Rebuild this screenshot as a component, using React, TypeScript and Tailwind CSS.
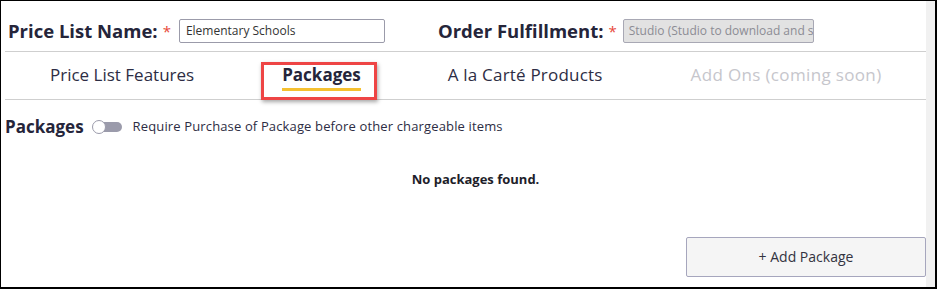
import React from "react";

export default function App() {
  const font = { fontFamily: "'Open Sans', Lato, sans-serif" };
  return (
    <div
      className="w-[937px] h-[289px] bg-white border-black border-t border-l border-r-2 border-b-2 flex overflow-hidden"
      style={font}
    >
      <div className="flex-1 flex flex-col pl-[4px] relative min-w-0">
        {/* Header row */}
        <div className="h-[51px] flex items-center border-b border-[#cfcfcf] pt-[10px] whitespace-nowrap">
          <div className="flex items-center pl-[3px]">
            <span className="text-[18.5px] font-bold text-[#25253a] leading-none">Price List Name:</span>
            <span className="text-[#e8473a] text-[15px] ml-[5px] mr-[8px] leading-none">*</span>
            <div className="w-[206px] h-[24px] border border-[#9b9baa] rounded-[2px] flex items-center pl-[6px] text-[12px] text-[#333]">
              Elementary Schools
            </div>
          </div>
          <div className="flex items-center ml-[53px]">
            <span className="text-[18.5px] font-bold text-[#25253a] leading-none">Order Fulfillment:</span>
            <span className="text-[#e8473a] text-[15px] ml-[5px] mr-[6px] leading-none">*</span>
            <div className="w-[191px] h-[24px] border border-[#a8a8b4] rounded-[2px] bg-[#e2e2e2] flex items-center pl-[5px] text-[12px] text-[#8c8c94] overflow-hidden whitespace-nowrap">
              Studio (Studio to download and s
            </div>
          </div>
        </div>

        {/* Tabs */}
        <div className="h-[48px] flex items-stretch border-b border-[#cfcfcf] relative whitespace-nowrap">
          <div className="shrink-0 pl-[45px] pr-[44px] flex items-center text-[17px] text-[#2d2d44] pb-[1px]">Price List Features</div>
          <div className="shrink-0 px-[44px] flex items-center text-[17px] font-bold text-[#25253a] relative pb-[1px]">
            Packages
            <div className="absolute left-[44px] right-[44px] top-[36px] h-[3px] bg-[#f5c030]" />
          </div>
          <div className="shrink-0 pl-[43px] pr-[47px] flex items-center text-[17px] text-[#2d2d44] tracking-[0.2px] pb-[1px]">A la Carté Products</div>
          <div className="shrink-0 pl-[41px] flex items-center text-[17px] text-[#c6c6cc] tracking-[0.35px] pb-[1px]">Add Ons (coming soon)</div>
        </div>

        {/* Red annotation box */}
        <div className="absolute left-[260px] top-[61px] w-[116px] h-[38px] border-[3px] border-[#ee4545] shadow-[1px_2px_4px_rgba(0,0,0,0.35)] pointer-events-none" />

        {/* Packages row */}
        <div className="flex items-center h-[54px] pb-[1px] whitespace-nowrap">
          <span className="text-[17px] font-bold text-[#25253a]">Packages</span>
          <div className="relative ml-[8px] w-[30px] h-[14px] flex items-center shrink-0">
            <div className="absolute left-[3px] right-0 h-[10px] rounded-full bg-[#9b9bab]" />
            <div className="absolute left-0 w-[14px] h-[14px] rounded-full bg-white border border-[#9b9bab]" />
          </div>
          <span className="ml-[11px] text-[13px] text-[#2d2d44] tracking-[0.14px]">Require Purchase of Package before other chargeable items</span>
        </div>

        <div className="flex justify-center pl-[20px] mt-[16px]">
          <span className="text-[13px] font-bold text-[#1e1e2a]">No packages found.</span>
        </div>

        <div className="flex justify-end mt-[47px]">
          <div className="w-[240px] h-[40px] border border-[#a6a6bd] rounded-[2px] bg-[#f5f5f5] flex items-center justify-center text-[14px] text-[#333340]">
            + Add Package
          </div>
        </div>
      </div>
      <div className="w-[9px] shrink-0 bg-[#f1f1f1]" />
    </div>
  );
}
